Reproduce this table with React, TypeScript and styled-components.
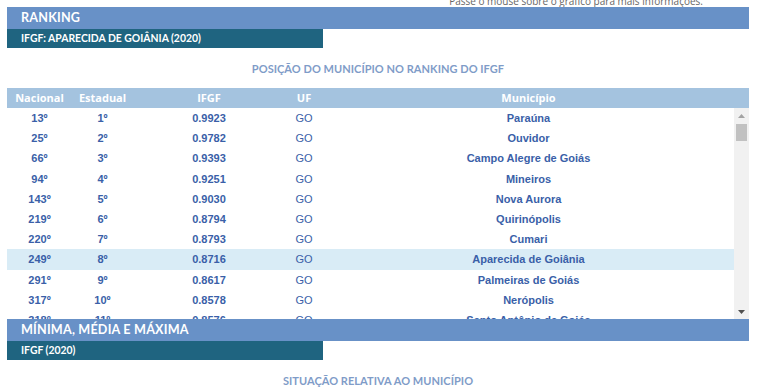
import React from "react";
import styled, { createGlobalStyle } from "styled-components";

const GlobalStyle = createGlobalStyle`
  html, body {
    margin: 0;
    padding: 0;
    background: #ffffff;
    overflow: hidden;
  }
`;

const Page = styled.div`
  width: 768px;
  height: 389px;
  padding-left: 7px;
  box-sizing: border-box;
  overflow: hidden;
`;

const Hint = styled.div`
  width: 742px;
  height: 7px;
  overflow: hidden;
  display: flex;
  align-items: flex-end;
  justify-content: flex-end;
  padding-right: 46px;
  box-sizing: border-box;
  font-family: "Open Sans", sans-serif;
  font-size: 10px;
  line-height: 12px;
  color: #666666;
`;

const Section = styled.section`
  width: 742px;
`;

const SectionBar = styled.div`
  height: 22px;
  background: #6891c7;
  color: #ffffff;
  font-family: Lato, sans-serif;
  font-weight: 700;
  font-size: 12.6px;
  line-height: 22px;
  padding-left: 14px;
  letter-spacing: 0.2px;
`;

const SubBar = styled.div`
  width: 316px;
  height: 19px;
  background: #1f6480;
  color: #ffffff;
  font-family: Lato, sans-serif;
  font-weight: 700;
  font-size: 10.4px;
  line-height: 19px;
  padding-left: 14px;
  box-sizing: border-box;
`;

const ChartTitle = styled.div<{ $top: number }>`
  text-align: center;
  padding-top: ${(p) => p.$top}px;
  font-family: Lato, sans-serif;
  font-weight: 700;
  font-size: 11px;
  line-height: 14px;
  color: #7f9cc8;
  letter-spacing: 0.05px;
`;

const TableWrap = styled.div`
  margin-top: 12px;
  width: 742px;
`;

const Grid = `
  display: grid;
  grid-template-columns: 65px 61px 152px 38px 1fr;
`;

const HeadRow = styled.div`
  ${Grid}
  height: 20px;
  background: #a4c3df;
  color: #ffffff;
  font-family: "Open Sans", sans-serif;
  font-weight: 700;
  font-size: 11px;
  line-height: 20px;
  text-align: center;
  padding-right: 15px;
`;

const Body = styled.div`
  display: flex;
  height: 211px;
`;

const Rows = styled.div`
  flex: 1;
  overflow: hidden;
`;

const Rail = styled.div`
  width: 15px;
  background: #f1f1f1;
  display: flex;
  flex-direction: column;
  align-items: center;
`;

const RailButton = styled.div`
  height: 15px;
  width: 15px;
  display: flex;
  align-items: center;
  justify-content: center;
`;

const Thumb = styled.div`
  width: 11px;
  height: 17px;
  margin-top: 1px;
  background: #c1c1c1;
`;

const RailSpacer = styled.div`
  flex: 1;
`;

const Row = styled.div<{ $active?: boolean }>`
  ${Grid}
  height: 20.2px;
  line-height: 20px;
  background: ${(p) => (p.$active ? "#d9ecf6" : "#ffffff")};
  font-family: "Liberation Sans", Arial, sans-serif;
  font-weight: 700;
  font-size: 11px;
  color: #3a5fa8;
  text-align: center;
`;

const Cell = styled.div<{ $light?: boolean }>`
  font-weight: ${(p) => (p.$light ? 400 : 700)};
  white-space: nowrap;
`;

const ranking = [
  ["13º", "1º", "0.9923", "Paraúna"],
  ["25º", "2º", "0.9782", "Ouvidor"],
  ["66º", "3º", "0.9393", "Campo Alegre de Goiás"],
  ["94º", "4º", "0.9251", "Mineiros"],
  ["143º", "5º", "0.9030", "Nova Aurora"],
  ["219º", "6º", "0.8794", "Quirinópolis"],
  ["220º", "7º", "0.8793", "Cumari"],
  ["249º", "8º", "0.8716", "Aparecida de Goiânia"],
  ["291º", "9º", "0.8617", "Palmeiras de Goiás"],
  ["317º", "10º", "0.8578", "Nerópolis"],
  ["318º", "11º", "0.8576", "Santo Antônio de Goiás"],
];

const Arrow = ({ up }: { up?: boolean }) => (
  <svg width="7" height="4" viewBox="0 0 7 4">
    <path
      d={up ? "M0 4 L3.5 0 L7 4 Z" : "M0 0 L3.5 4 L7 0 Z"}
      fill={up ? "#a3a3a3" : "#505050"}
    />
  </svg>
);

export default function App() {
  return (
    <Page>
      <GlobalStyle />
      <Hint>Passe o mouse sobre o gráfico para mais informações.</Hint>
      <Section>
        <SectionBar>RANKING</SectionBar>
        <SubBar>IFGF: APARECIDA DE GOIÂNIA (2020)</SubBar>
        <ChartTitle $top={14}>POSIÇÃO DO MUNICÍPIO NO RANKING DO IFGF</ChartTitle>
        <TableWrap>
          <HeadRow>
            <div>Nacional</div>
            <div>Estadual</div>
            <div>IFGF</div>
            <div>UF</div>
            <div>Município</div>
          </HeadRow>
          <Body>
            <Rows>
              {ranking.map(([nac, est, ifgf, mun]) => (
                <Row key={est} $active={mun === "Aparecida de Goiânia"}>
                  <Cell>{nac}</Cell>
                  <Cell>{est}</Cell>
                  <Cell>{ifgf}</Cell>
                  <Cell $light>GO</Cell>
                  <Cell>{mun}</Cell>
                </Row>
              ))}
            </Rows>
            <Rail>
              <RailButton>
                <Arrow up />
              </RailButton>
              <Thumb />
              <RailSpacer />
              <RailButton>
                <Arrow />
              </RailButton>
            </Rail>
          </Body>
        </TableWrap>
      </Section>
      <Section>
        <SectionBar>MÍNIMA, MÉDIA E MÁXIMA</SectionBar>
        <SubBar>IFGF (2020)</SubBar>
        <ChartTitle $top={14}>SITUAÇÃO RELATIVA AO MUNICÍPIO</ChartTitle>
      </Section>
    </Page>
  );
}
